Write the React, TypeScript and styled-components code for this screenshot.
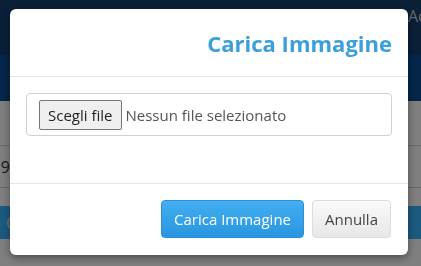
import React from 'react';
import styled, { createGlobalStyle } from 'styled-components';

const GlobalStyle = createGlobalStyle`
  html, body {
    margin: 0;
    padding: 0;
    width: 421px;
    height: 266px;
    overflow: hidden;
    font-family: "Open Sans", "Noto Sans", Arial, sans-serif;
  }
`;

const Page = styled.div`
  width: 421px;
  height: 266px;
  display: flex;
  flex-direction: column;
  background: #ffffff;
  overflow: hidden;
`;

const TopBar = styled.div`
  height: 55px;
  background: #14406f;
  padding: 5px 0 0 408px;
  box-sizing: border-box;
  color: #c8d2dc;
  font-size: 16px;
  white-space: nowrap;
`;

const NavBar = styled.div`
  height: 46px;
  background: #0a4c94;
`;

const Row = styled.div<{ $h: number }>`
  height: ${p => p.$h}px;
  border-bottom: 1px solid #d4d4d4;
  display: flex;
  align-items: center;
  box-sizing: border-box;
`;

const Cell = styled.span`
  width: 10px;
  display: flex;
  justify-content: flex-end;
  font-size: 16px;
  color: #333;
  white-space: nowrap;
  overflow: visible;
`;

const Band = styled.div`
  height: 33px;
  background: #36b4ff;
  margin-top: 18px;
  display: flex;
  align-items: center;
  padding-left: 6px;
  color: #e8e8e8;
`;

const Backdrop = styled.div`
  position: fixed;
  inset: 0;
  background: rgba(0, 0, 0, 0.5);
  display: flex;
  align-items: flex-start;
  justify-content: flex-start;
  padding: 9px 0 0 10px;
`;

const Modal = styled.div`
  width: 398px;
  background: #fff;
  border-radius: 6px;
  box-shadow: 0 3px 9px rgba(0, 0, 0, 0.4);
  display: flex;
  flex-direction: column;
`;

const Header = styled.div`
  height: 68px;
  box-sizing: border-box;
  padding: 0 16px;
  display: flex;
  align-items: center;
  justify-content: flex-end;
  border-bottom: 1px solid #e5e5e5;
`;

const Title = styled.h4`
  margin: 0;
  font-size: 22px;
  font-weight: 700;
  color: #3a9fdb;
`;

const Body = styled.div`
  padding: 16px;
  height: 107px;
  box-sizing: border-box;
  border-bottom: 1px solid #e5e5e5;
`;

const FileBox = styled.div`
  height: 43px;
  box-sizing: border-box;
  border: 1px solid #d0d0d0;
  border-radius: 4px;
  display: flex;
  align-items: center;
  padding: 0 12px;
  gap: 4px;
`;

const FileButton = styled.span`
  height: 30px;
  box-sizing: border-box;
  padding: 0 8px;
  display: inline-flex;
  align-items: center;
  border: 1px solid #767676;
  border-radius: 2px;
  background: #efefef;
  color: #222;
  font-size: 15px;
`;

const FileName = styled.span`
  font-size: 15px;
  color: #555;
`;

const Footer = styled.div`
  padding: 16px 17px 17px;
  display: flex;
  justify-content: flex-end;
  gap: 8px;
`;

const Button = styled.button<{ $primary?: boolean }>`
  height: 38px;
  padding: 0 12px;
  font-family: inherit;
  font-size: 15px;
  border-radius: 4px;
  cursor: pointer;
  border: 1px solid ${p => (p.$primary ? '#2a8fd6' : '#dcdcdc')};
  color: ${p => (p.$primary ? '#fff' : '#444')};
  background: ${p =>
    p.$primary
      ? 'linear-gradient(#43aef0, #2896e0)'
      : 'linear-gradient(#fafafa, #e7e7e7)'};
`;

export default function App() {
  return (
    <>
      <GlobalStyle />
      <Page>
        <TopBar>Account</TopBar>
        <NavBar />
        <Row $h={45} />
        <Row $h={42}>
          <Cell>2019</Cell>
        </Row>
        <Band>C</Band>
      </Page>
      <Backdrop>
        <Modal>
          <Header>
            <Title>Carica Immagine</Title>
          </Header>
          <Body>
            <FileBox>
              <FileButton>Scegli file</FileButton>
              <FileName>Nessun file selezionato</FileName>
            </FileBox>
          </Body>
          <Footer>
            <Button $primary>Carica Immagine</Button>
            <Button>Annulla</Button>
          </Footer>
        </Modal>
      </Backdrop>
    </>
  );
}
